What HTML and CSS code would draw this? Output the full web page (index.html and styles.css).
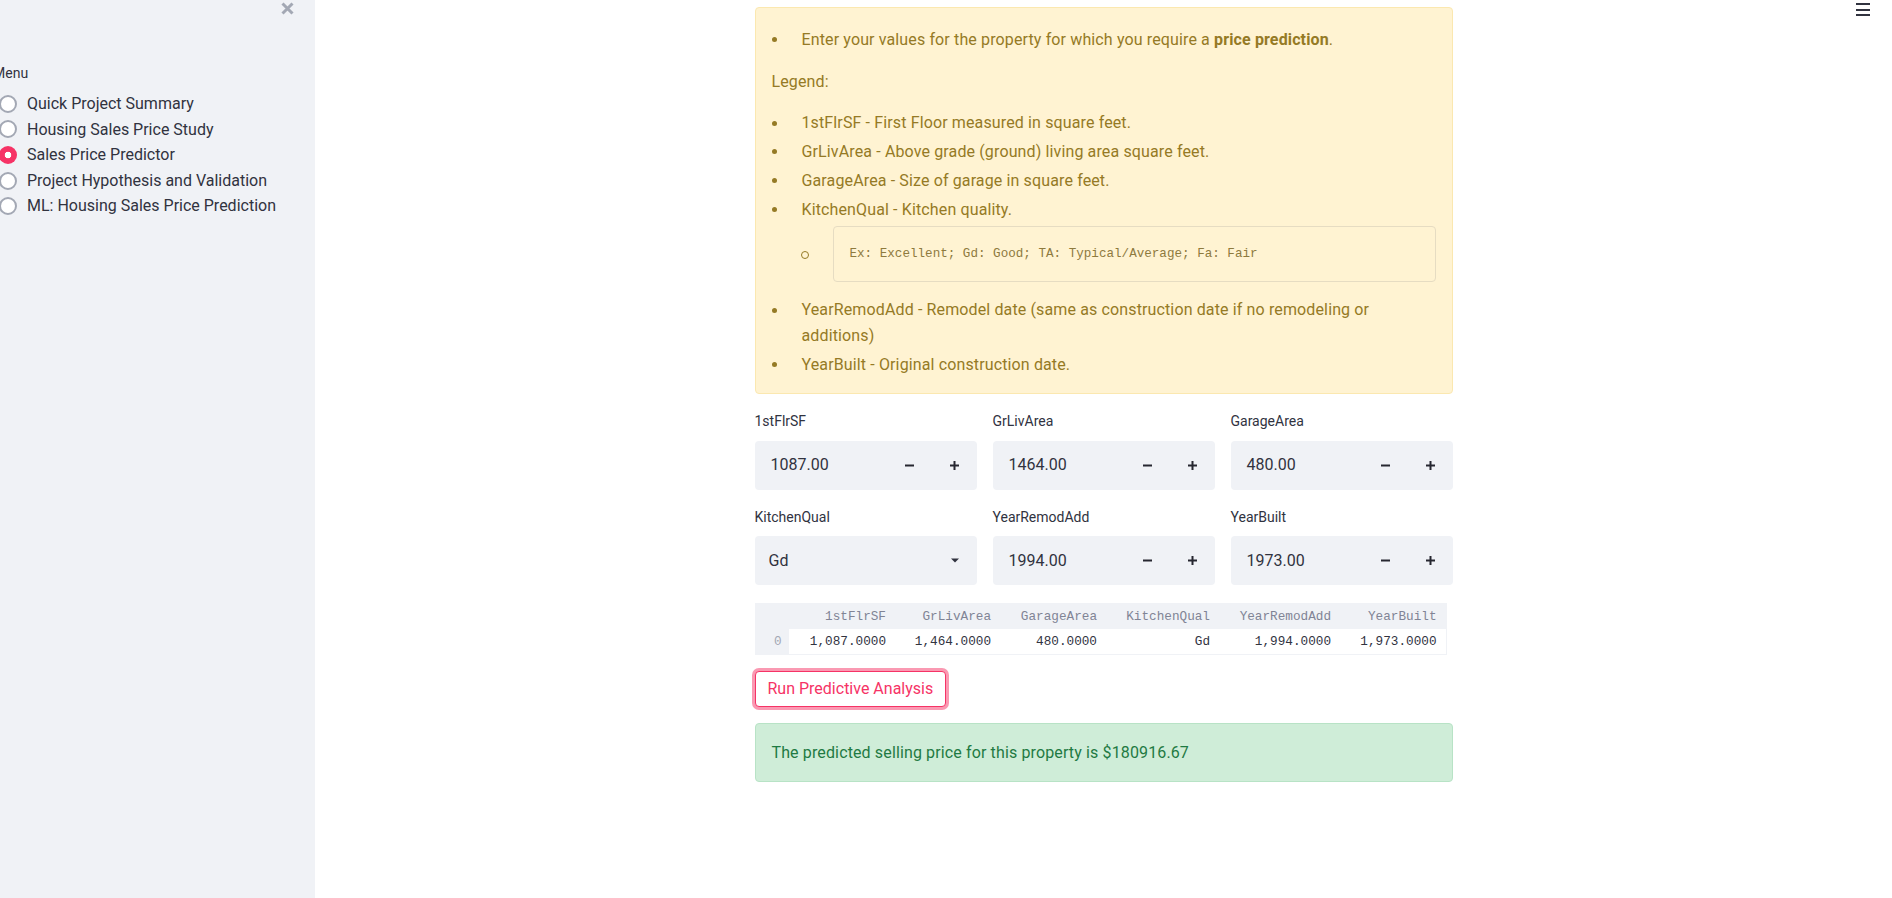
FILE: index.html
```html
<!DOCTYPE html>
<html lang="en">
<head>
<meta charset="utf-8">
<title>Sales Price Predictor</title>
<link rel="stylesheet" href="styles.css">
</head>
<body>
<div class="app">
  <aside class="sidebar">
    <div class="sb-top">
      <svg class="close" width="13" height="13" viewBox="0 0 13 13"><path d="M1.5 1.5 L11.5 11.5 M11.5 1.5 L1.5 11.5" stroke="#a3a8b4" stroke-width="3" stroke-linecap="butt" fill="none"/></svg>
    </div>
    <div class="menu">
      <div class="menu-label">Menu</div>
      <div class="radio-list">
        <div class="radio"><span class="circle"></span><span>Quick Project Summary</span></div>
        <div class="radio"><span class="circle"></span><span>Housing Sales Price Study</span></div>
        <div class="radio"><span class="circle on"></span><span>Sales Price Predictor</span></div>
        <div class="radio"><span class="circle"></span><span>Project Hypothesis and Validation</span></div>
        <div class="radio"><span class="circle"></span><span>ML: Housing Sales Price Prediction</span></div>
      </div>
    </div>
  </aside>
  <main class="main">
    <div class="hamburger"><span></span><span></span><span></span></div>
    <div class="block">
      <div class="alert warn">
        <ul class="list">
          <li><span class="t">Enter your values for the property for which you require a <strong>price prediction</strong>.</span></li>
        </ul>
        <p>Legend:</p>
        <ul class="list">
          <li><span class="t">1stFlrSF - First Floor measured in square feet.</span></li>
          <li><span class="t">GrLivArea - Above grade (ground) living area square feet.</span></li>
          <li><span class="t">GarageArea - Size of garage in square feet.</span></li>
          <li><div class="t-wide">KitchenQual - Kitchen quality.
            <ul class="sub"><li><pre>Ex: Excellent; Gd: Good; TA: Typical/Average; Fa: Fair</pre></li></ul>
          </div></li>
          <li><span class="t">YearRemodAdd - Remodel date (same as construction date if no remodeling or additions)</span></li>
          <li><span class="t">YearBuilt - Original construction date.</span></li>
        </ul>
      </div>

      <div class="widgets">
        <div class="widget">
          <div class="wlabel">1stFlrSF</div>
          <div class="field"><div class="val">1087.00</div><div class="step"><svg width="9" height="9" viewBox="0 0 9 9"><path d="M0 4.5H9" stroke="#262730" stroke-width="2"/></svg></div><div class="step"><svg width="9" height="9" viewBox="0 0 9 9"><path d="M0 4.5H9M4.5 0V9" stroke="#262730" stroke-width="2"/></svg></div></div>
        </div>
        <div class="widget">
          <div class="wlabel">GrLivArea</div>
          <div class="field"><div class="val">1464.00</div><div class="step"><svg width="9" height="9" viewBox="0 0 9 9"><path d="M0 4.5H9" stroke="#262730" stroke-width="2"/></svg></div><div class="step"><svg width="9" height="9" viewBox="0 0 9 9"><path d="M0 4.5H9M4.5 0V9" stroke="#262730" stroke-width="2"/></svg></div></div>
        </div>
        <div class="widget">
          <div class="wlabel">GarageArea</div>
          <div class="field"><div class="val">480.00</div><div class="step"><svg width="9" height="9" viewBox="0 0 9 9"><path d="M0 4.5H9" stroke="#262730" stroke-width="2"/></svg></div><div class="step"><svg width="9" height="9" viewBox="0 0 9 9"><path d="M0 4.5H9M4.5 0V9" stroke="#262730" stroke-width="2"/></svg></div></div>
        </div>
        <div class="widget">
          <div class="wlabel">KitchenQual</div>
          <div class="field select"><div class="val">Gd</div><svg class="caret" width="8" height="5" viewBox="0 0 8 5"><path d="M0 0.5H8L4 4.5Z" fill="#31333f"/></svg></div>
        </div>
        <div class="widget">
          <div class="wlabel">YearRemodAdd</div>
          <div class="field"><div class="val">1994.00</div><div class="step"><svg width="9" height="9" viewBox="0 0 9 9"><path d="M0 4.5H9" stroke="#262730" stroke-width="2"/></svg></div><div class="step"><svg width="9" height="9" viewBox="0 0 9 9"><path d="M0 4.5H9M4.5 0V9" stroke="#262730" stroke-width="2"/></svg></div></div>
        </div>
        <div class="widget">
          <div class="wlabel">YearBuilt</div>
          <div class="field"><div class="val">1973.00</div><div class="step"><svg width="9" height="9" viewBox="0 0 9 9"><path d="M0 4.5H9" stroke="#262730" stroke-width="2"/></svg></div><div class="step"><svg width="9" height="9" viewBox="0 0 9 9"><path d="M0 4.5H9M4.5 0V9" stroke="#262730" stroke-width="2"/></svg></div></div>
        </div>
      </div>

      <div class="table-wrap">
        <table class="df">
          <colgroup><col class="c0"><col class="c1"><col class="c2"><col class="c3"><col class="c4"><col class="c5"><col class="c6"></colgroup>
          <thead><tr><th class="idx"></th><th>1stFlrSF</th><th>GrLivArea</th><th>GarageArea</th><th>KitchenQual</th><th>YearRemodAdd</th><th>YearBuilt</th></tr></thead>
          <tbody><tr><th class="idx">0</th><td>1,087.0000</td><td>1,464.0000</td><td>480.0000</td><td>Gd</td><td>1,994.0000</td><td>1,973.0000</td></tr></tbody>
        </table>
      </div>

      <div class="btn-row"><button class="btn">Run Predictive Analysis</button></div>

      <div class="alert ok">The predicted selling price for this property is $180916.67</div>
    </div>
  </main>
</div>
</body>
</html>
```
FILE: styles.css
```css
* { box-sizing: border-box; }
html, body { margin: 0; padding: 0; }
body {
  font-family: Roboto, "Liberation Sans", sans-serif;
  font-size: 16px;
  color: #31333f;
  background: #ffffff;
}
.app { display: flex; height: 898px; overflow: hidden; }

/* Sidebar */
.sidebar {
  width: 315px;
  flex: none;
  background: #f0f2f6;
  height: 100%;
  overflow: hidden;
  padding-top: 2px;
}
.sb-top {
  height: 61px;
  display: flex;
  justify-content: flex-end;
  align-items: flex-start;
  padding-right: 21px;
}
.close { display: block; }
.menu-label {
  font-size: 14px;
  line-height: 20px;
  margin-left: -7px;
  margin-bottom: 8px;
}
.radio-list { margin-left: -1px; }
.radio {
  display: flex;
  align-items: center;
  height: 25.6px;
  gap: 10px;
  line-height: 25.6px;
}
.circle {
  width: 18px;
  height: 18px;
  flex: none;
  border-radius: 50%;
  border: 2px solid #a3a8b4;
  background: #ffffff;
}
.circle.on {
  border: none;
  background: radial-gradient(circle, #ffffff 0 3px, #f63366 3.6px);
}

/* Main */
.main {
  flex: 1;
  position: relative;
  min-width: 0;
}
.hamburger {
  position: absolute;
  top: 3px;
  right: 22px;
  width: 14px;
  display: flex;
  flex-direction: column;
  gap: 3.5px;
}
.hamburger span { display: block; height: 2px; background: #31333f; }

.block {
  width: 698px;
  margin: 0 auto;
  padding-top: 7px;
  display: flex;
  flex-direction: column;
  gap: 16px;
}

.alert {
  border-radius: 4px;
  padding: 16px;
  line-height: 25.6px;
  letter-spacing: 0.13px;
}
.alert.warn {
  background: #fff3d2;
  border: 1px solid #fbe8b0;
  color: #957a25;
}
.alert.ok {
  background: #cfedd8;
  border: 1px solid #b8e3c6;
  color: #1f7a43;
}
.alert p { margin: 0 0 16px; }
.alert > :last-child { margin-bottom: 0; }

.list, .sub {
  list-style: none;
  margin: 0 0 16px;
  padding: 0;
}
.sub { margin: 0; }
.list > li {
  display: flex;
  margin-top: 3.2px;
}
.list > li::before {
  content: "";
  flex: none;
  width: 5px;
  height: 5px;
  border-radius: 50%;
  background: currentColor;
  margin: 10.3px 25px 0 0;
}
.t { flex: 1; min-width: 0; max-width: 610px; }
.t-wide { flex: 1; min-width: 0; }
strong { font-weight: 700; }

.sub > li {
  display: flex;
  margin-top: 3.2px;
}
.sub > li::before {
  content: "";
  flex: none;
  width: 6px;
  height: 6px;
  border-radius: 50%;
  border: 1px solid currentColor;
  margin: 25px 24px 0 -1px;
}
pre {
  flex: 1;
  margin: 0 0 12.8px;
  padding: 16px;
  border: 1px solid #e6dcc2;
  border-radius: 4px;
  font-family: "Liberation Mono", monospace;
  font-size: 12.6px;
  line-height: 22px;
  letter-spacing: 0;
  color: #8e7a3e;
}

/* Widgets */
.widgets {
  display: grid;
  grid-template-columns: repeat(3, 222px);
  column-gap: 16px;
  row-gap: 16px;
}
.wlabel {
  font-size: 14px;
  line-height: 22.4px;
  margin-bottom: 8px;
}
.field {
  display: flex;
  align-items: center;
  height: 48.8px;
  background: #f0f2f6;
  border-radius: 4px;
}
.val {
  flex: 1;
  padding-left: 16px;
  line-height: 25.6px;
}
.step {
  width: 44.8px;
  height: 100%;
  display: flex;
  align-items: center;
  justify-content: center;
}
.step svg { display: block; }
.select .val { padding-left: 14px; }
.caret { margin-right: 18px; display: block; }

/* Table */
.table-wrap { margin-top: 2px; }
.df {
  border-collapse: collapse;
  table-layout: fixed;
  width: 691px;
  font-family: "Liberation Mono", monospace;
  font-size: 12.7px;
  border: 1px solid #f0f2f6;
}
.c0 { width: 34px; }
.c1 { width: 106px; }
.c2 { width: 105px; }
.c3 { width: 106px; }
.c4 { width: 113px; }
.c5 { width: 121px; }
.c6 { width: 106px; }
.df th, .df td {
  height: 25.6px;
  padding: 0 9px 0 0;
  text-align: right;
  white-space: nowrap;
  font-weight: 400;
}
.df thead th {
  background: #f0f2f6;
  color: #808495;
}
.df tbody td {
  background: #ffffff;
  color: #31333f;
  border-bottom: 1px solid #f0f2f6;
}
.df th.idx {
  background: #f0f2f6;
  color: #a3a8b4;
  padding-right: 7.5px;
}

/* Button */
.btn-row { display: flex; }
.btn {
  font-family: Roboto, "Liberation Sans", sans-serif;
  font-size: 16px;
  line-height: 25.6px;
  padding: 4px 12px;
  background: #ffffff;
  color: #f63366;
  border: 1px solid #f63366;
  border-radius: 4px;
  box-shadow: 0 0 0 3px rgba(246, 51, 102, 0.5);
  cursor: pointer;
}
```
